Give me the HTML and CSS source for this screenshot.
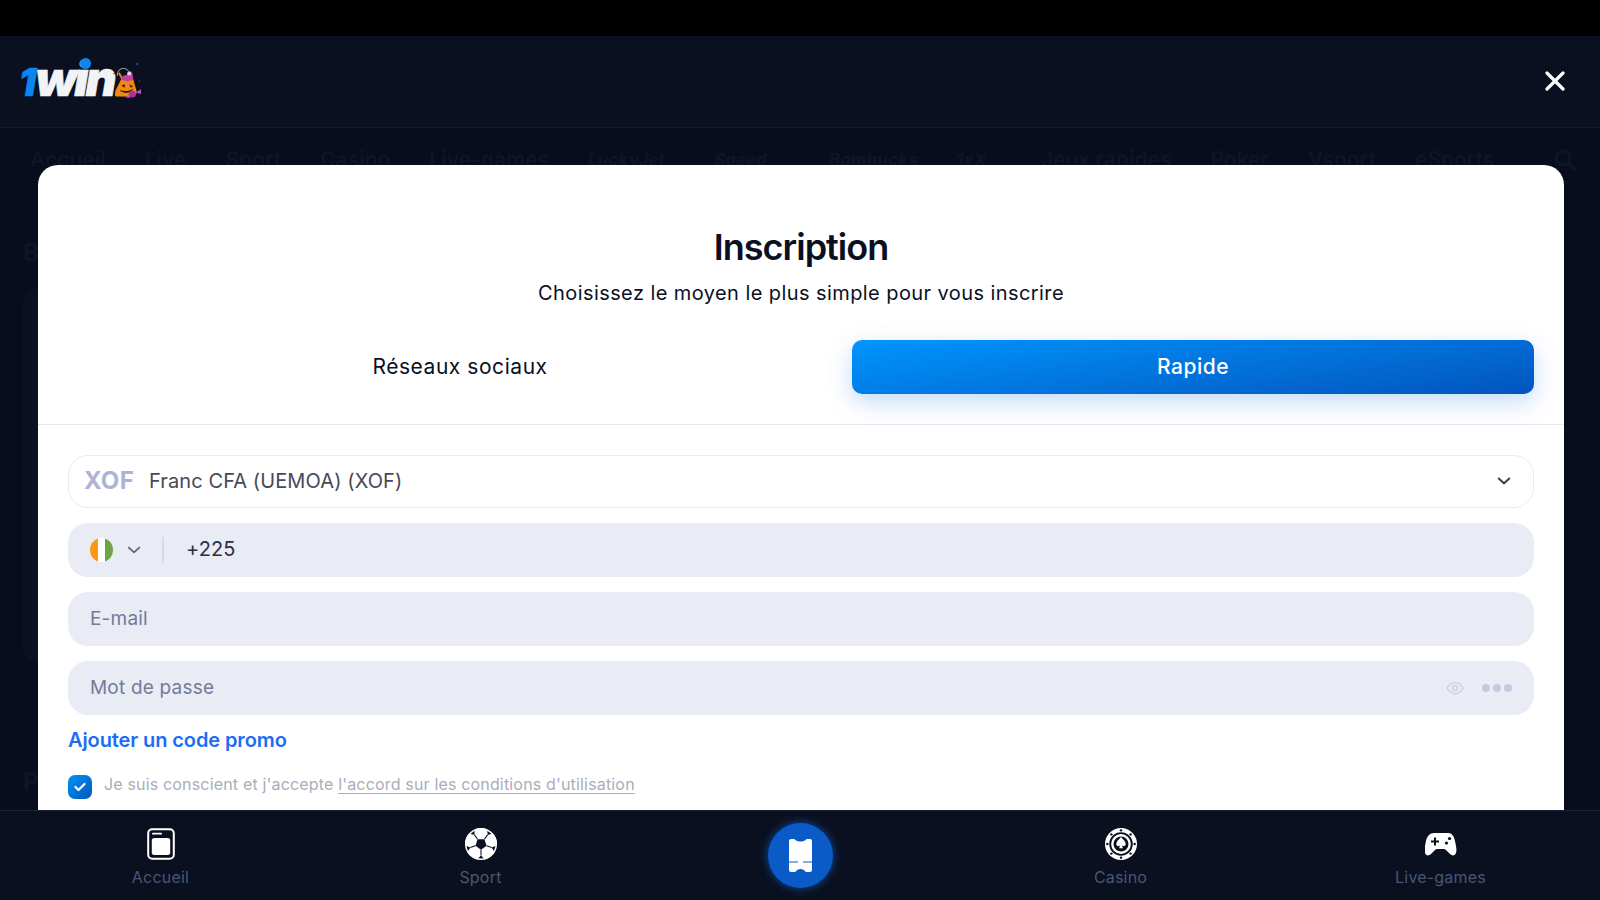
FILE: index.html
```html
<!DOCTYPE html>
<html lang="fr">
<head>
<meta charset="utf-8">
<title>Inscription</title>
<link rel="stylesheet" href="styles.css">
</head>
<body>
<div class="viewport">
  <div class="topbar"></div>
  <header class="header">
    <div class="logo">
      <span class="logo-one">1</span><span class="logo-win">win</span>
      <i class="logo-dot"></i>
      <svg class="logo-art" viewBox="0 0 40 48" aria-hidden="true">
        <circle cx="34" cy="5" r="1.500" fill="#1c4f8f"/><circle cx="5" cy="17" r="1" fill="#1c4f8f"/><circle cx="37" cy="27" r="1" fill="#1c4f8f"/>
        <path d="M9 20C9 7 24 8 26 20" fill="none" stroke="#b9b9c0" stroke-width="1.200"/>
        <path d="M11 16l5 9" stroke="#ee7a12" stroke-width="2.500"/>
        <path d="M14 24c4-3 11-3 15 0l4 14c1 5-1 8-5 8H8c-3 0-2-4-1-8z" fill="#f28a12"/>
        <path d="M14 25c0-5 4-6 7-6 1-5 6-6 7-2 1 3 1 6 1 8l-7 2z" fill="#c33fa0"/>
        <circle cx="24" cy="17" r="2.500" fill="#e9d6ee"/>
        <path d="M14 32l5-1-1 4zM24 31l5 2-3 2zM12 38c5 2 12 2 17-2-2 7-14 7-17 2z" fill="#3b1a05"/>
        <circle cx="28" cy="43" r="4.500" fill="#a7339f"/><path d="M32 41l7-4v6zM24 44l-5 3 6 1z" fill="#d14bbd"/>
      </svg>
    </div>
    <svg class="close" viewBox="0 0 20 20" aria-hidden="true"><path d="M2 2l16 16M18 2L2 18"/></svg>
  </header>
  <main class="stage">
    <nav class="behind-nav">
      <span>Accueil</span><span>Live</span><span>Sport</span><span>Casino</span><span>Live-games</span><span class="promo promo-a">LuckyJet</span><span class="promo promo-b">Speed</span><span class="promo promo-c">Bombucks</span><span class="promo promo-d">1xX</span><span>Jeux rapides</span><span>Poker</span><span>Vsport</span><span>eSports</span>
      <svg class="behind-search" viewBox="0 0 24 24" aria-hidden="true"><circle cx="10" cy="10" r="7"/><path d="M15 15l7 7"/></svg>
    </nav>
    <span class="behind-letter behind-b">B</span>
    <div class="behind-card"></div>
    <span class="behind-letter behind-p">P</span>

    <section class="modal">
      <div class="modal-head">
        <h1 class="title">Inscription</h1>
        <p class="subtitle">Choisissez le moyen le plus simple pour vous inscrire</p>
        <div class="tabs">
          <button class="tab">Réseaux sociaux</button>
          <button class="tab tab-active">Rapide</button>
        </div>
      </div>
      <form class="form">
        <div class="select">
          <span class="cur-code">XOF</span>
          <span class="cur-name">Franc CFA (UEMOA) (XOF)</span>
          <svg class="chev-dark" viewBox="0 0 12 8" aria-hidden="true"><path d="M1 1.500l5 4.500 5-4.500"/></svg>
        </div>
        <div class="field">
          <span class="flag"><i class="flag-o"></i><i class="flag-w"></i><i class="flag-g"></i></span>
          <svg class="chev" viewBox="0 0 12 8" aria-hidden="true"><path d="M1 1.500l5 4.500 5-4.500"/></svg>
          <span class="sep"></span>
          <span class="phone">+225</span>
        </div>
        <div class="field"><span class="placeholder">E-mail</span></div>
        <div class="field">
          <span class="placeholder">Mot de passe</span>
          <svg class="eye" viewBox="0 0 18 14" aria-hidden="true"><path d="M1 7c4-7.500 12-7.500 16 0-4 7.500-12 7.500-16 0z"/><circle cx="9" cy="7" r="2.500"/></svg>
          <span class="dots"><i></i><i></i><i></i></span>
        </div>
        <a class="promo-link">Ajouter un code promo</a>
        <div class="agree">
          <span class="check"><svg viewBox="0 0 12 10" aria-hidden="true"><path d="M1.500 5l3 3 6-6"/></svg></span>
          <span class="agree-text">Je suis conscient et j'accepte <u>l'accord sur les conditions d'utilisation</u></span>
        </div>
      </form>
    </section>
  </main>
  <footer class="tabbar">
    <a class="nav-item">
      <svg class="nav-icon" viewBox="0 0 28 32" aria-hidden="true"><rect x="1.200" y="1.200" width="25.600" height="29.600" rx="4" fill="none" stroke="#fff" stroke-width="2"/><rect x="5" y="4.800" width="10" height="1.800" rx=".9" fill="#fff"/><rect x="4.800" y="10" width="18.400" height="17" rx="2.500" fill="#fff"/></svg>
      <span>Accueil</span>
    </a>
    <a class="nav-item">
      <svg class="nav-icon" viewBox="0 0 30 30" aria-hidden="true"><circle cx="15" cy="15" r="15" fill="#fff"/><path d="M18.200 10.600l2 6.100L15 20.500l-5.200-3.800 2-6.100z" fill="#0a101f"/><path d="M18.200 10.600l3-4.100M20.200 16.700l4.800 1.500M15 20.500v5M9.800 16.700L5 18.200M11.800 10.600l-3-4.100" stroke="#0a101f" stroke-width="1"/><path d="M21.200 6.500l-.4-5.900 6.100 4.400zM25 18.200l5.500-2.100-2.400 7.100zM15 25.500l3.750 4.500h-7.500zM5 18.200l-5.500-2.100 2.400 7.100zM8.800 6.500l.4-5.900L3.100 5z" fill="#0a101f"/><circle cx="15" cy="15" r="14.300" fill="none" stroke="#fff" stroke-width="1.400"/></svg>
      <span>Sport</span>
    </a>
    <a class="nav-item nav-center">
      <span class="ticket"><svg viewBox="0 0 23 33" aria-hidden="true"><path d="M2 0h3c1 0 1.500 2.500 6.500 2.500S17 0 18 0h3a2 2 0 0 1 2 2v29a2 2 0 0 1-2 2h-4c-1 0-1.500-3-5.500-3S7 33 6 33H2a2 2 0 0 1-2-2V2a2 2 0 0 1 2-2z" fill="#fff"/><path d="M0 23h9M14 23h9" stroke="#0a5ac8" stroke-width="1"/></svg></span>
    </a>
    <a class="nav-item">
      <svg class="nav-icon" viewBox="0 0 34 34" aria-hidden="true"><circle cx="17" cy="17" r="17" fill="#fff"/><circle cx="17" cy="17" r="12.500" fill="#0a101f"/><circle cx="17" cy="17" r="10.500" fill="#fff"/><circle cx="17" cy="17" r="8" fill="#0a101f"/><path d="M17 9.500c2.500 3 5 4.500 5 7.500 0 2.400-3 3-4 1.200l1 3.300h-4l1-3.300c-1 1.800-4 1.200-4-1.200 0-3 2.500-4.500 5-7.500z" fill="#fff"/><g fill="#0a101f"><circle cx="17" cy="2.500" r="1.300"/><circle cx="17" cy="31.500" r="1.300"/><circle cx="2.500" cy="17" r="1.300"/><circle cx="31.500" cy="17" r="1.300"/><circle cx="6.800" cy="6.800" r="1.300"/><circle cx="27.200" cy="6.800" r="1.300"/><circle cx="6.800" cy="27.200" r="1.300"/><circle cx="27.200" cy="27.200" r="1.300"/></g></svg>
      <span>Casino</span>
    </a>
    <a class="nav-item">
      <svg class="nav-icon nav-icon-wide" viewBox="0 0 32 24" aria-hidden="true"><path d="M9 1h14c4 0 6 3 7 8s2 9 1 12c-1 3-4 3-6 1l-4-4c-1-1-1.500-1-2.500-1h-6c-1 0-1.500 0-2.500 1l-4 4c-2 2-5 2-6-1-1-3 0-7 1-12S5 1 9 1z" fill="#fff"/><path d="M9 5.500h2v3h3v2h-3v3H9v-3H6v-2h3z" fill="#0a101f"/><circle cx="24.500" cy="6.500" r="1.600" fill="#0a101f"/><circle cx="21.500" cy="11" r="1.600" fill="#0a101f"/></svg>
      <span>Live-games</span>
    </a>
  </footer>
</div>
</body>
</html>
```
FILE: styles.css
```css
* { box-sizing: border-box; }
html, body { margin: 0; padding: 0; }
body { background: #000; font-family: Inter, "Liberation Sans", sans-serif; }

.viewport { width: 1600px; height: 900px; display: flex; flex-direction: column; overflow: hidden; background: #070d1d; }
.topbar { height: 36px; background: #000; flex: none; }

.header { height: 92px; flex: none; display: flex; align-items: center; justify-content: space-between; padding: 0 35px 2px 19px; border-bottom: 1px solid #141a2b; background: #0a101f; }
.logo { position: relative; display: flex; align-items: baseline; height: 50px; width: 126px; font-family: Inter, sans-serif; font-weight: 900; font-style: italic; line-height: 46px; }
.logo-one { color: #0b86f0; font-size: 38px; margin-right: -1px; -webkit-text-stroke: .6px #0b86f0; }
.logo-win { color: #f2f3f5; font-size: 48px; letter-spacing: -3px; -webkit-text-stroke: .6px #f2f3f5; }
.logo-dot { position: absolute; left: 61px; top: 2px; width: 11px; height: 11px; border-radius: 50%; background: #0b86f0; }
.logo-art { position: absolute; left: 91px; top: 4px; width: 32px; height: 38px; }
.close { width: 20px; height: 20px; fill: none; stroke: #fff; stroke-width: 3.200; stroke-linecap: round; }

.stage { position: relative; flex: 1; min-height: 0; overflow: hidden; }
.behind-nav { display: flex; align-items: center; gap: 39px; height: 60px; padding: 3px 23px 0 30px; color: #0e1524; font-size: 21px; font-weight: 600; white-space: nowrap; }
.behind-nav .promo { display: block; font-style: italic; font-weight: 800; font-size: 17px; }
.behind-nav .promo-a { width: 87px; }
.behind-nav .promo-b { width: 76px; }
.behind-nav .promo-c { width: 88px; }
.behind-nav .promo-d { width: 46px; }
.behind-search { width: 24px; height: 24px; margin-left: auto; fill: none; stroke: #0e1524; stroke-width: 3; }
.behind-letter { position: absolute; left: 23px; color: #0e1524; font-size: 24px; font-weight: 700; }
.behind-b { top: 110px; }
.behind-p { top: 639px; }
.behind-card { position: absolute; left: 23px; top: 160px; width: 60px; height: 374px; border-radius: 16px; background: #0c1020; }

.modal { position: absolute; left: 38px; top: 37px; width: 1526px; height: 720px; background: #fff; border-radius: 20px 20px 0 0; }
.modal-head { height: 260px; padding-top: 60px; border-bottom: 1px solid #e4e7ef; text-align: center; }
.title { margin: 0; font-size: 36px; line-height: 44px; font-weight: 600; letter-spacing: -1px; color: #0a101f; }
.subtitle { margin: 10px 0 0; font-size: 20px; line-height: 28px; font-weight: 400; letter-spacing: .42px; color: #0a101f; }
.tabs { display: grid; grid-template-columns: 1fr 682px; margin-top: 33px; padding: 0 30px; }
.tab { height: 54px; padding: 0 0 2px; border: 0; background: transparent; font: 400 21px Inter, sans-serif; letter-spacing: .55px; color: #0a101f; border-radius: 10px; }
.tab-active { color: #fff; font-weight: 500; letter-spacing: .5px; background: linear-gradient(172deg, #0095fe 0%, #0354bd 100%); box-shadow: 0 8px 24px rgba(0, 105, 225, .24); }

.form { padding: 30px 30px 0; display: flex; flex-direction: column; }
.select { display: flex; align-items: center; height: 53px; border: 1px solid #e9ebf5; border-radius: 20px; padding: 0 22px 2px 15px; }
.cur-code { font-size: 24px; font-weight: 700; color: #adb3d8; width: 65px; letter-spacing: .4px; }
.cur-name { font-size: 20px; letter-spacing: .1px; color: #454a58; flex: 1; }
.chev-dark { width: 14px; height: 10px; fill: none; stroke: #3d4252; stroke-width: 1.800; }
.field { display: flex; align-items: center; height: 54px; margin-top: 15px; padding: 0 22px; background: #e9ebf5; border-radius: 20px; }
.flag { display: flex; width: 23px; height: 24px; border-radius: 50%; overflow: hidden; flex: none; }
.flag i { flex: 1; display: block; }
.flag-o { background: #ff9811; }
.flag-w { background: #fff; }
.flag-g { background: #6da544; }
.chev { width: 14px; height: 10px; margin-left: 14px; fill: none; stroke: #5f6780; stroke-width: 1.600; }
.sep { width: 2px; height: 26px; margin: 0 22px 0 21px; background: #d6dbea; }
.phone { font-size: 20px; letter-spacing: .1px; color: #2c3140; margin-top: -2px; }
.placeholder { font-size: 19px; letter-spacing: .2px; color: #737b98; flex: 1; margin-top: -2px; }
.eye { width: 18px; height: 14px; fill: none; stroke: #cdd1e2; stroke-width: 1.500; }
.dots { display: flex; gap: 3px; margin-left: 18px; }
.dots i { width: 8px; height: 8px; border-radius: 50%; background: #c2cae4; }
.promo-link { margin-top: 13px; font-size: 20px; line-height: 24px; font-weight: 600; letter-spacing: -.1px; color: #1a6ef5; }
.agree { display: flex; align-items: flex-start; gap: 12px; margin-top: 23px; }
.check { width: 24px; height: 24px; border-radius: 7px; background: linear-gradient(135deg, #0095fa, #0356b8); display: flex; align-items: center; justify-content: center; flex: none; }
.check svg { width: 12px; height: 10px; fill: none; stroke: #fff; stroke-width: 2.200; stroke-linecap: round; stroke-linejoin: round; }
.agree-text { font-size: 16px; line-height: 18px; letter-spacing: .17px; color: #a9adbc; }
.agree-text u { text-underline-offset: 3px; }

.tabbar { position: relative; height: 90px; flex: none; display: grid; grid-template-columns: repeat(5, 320px); background: #0a101f; border-top: 1px solid #1a2135; }
.nav-item { display: flex; flex-direction: column; align-items: center; padding: 17px 0 0 1px; gap: 7px; font-size: 16px; line-height: 20px; letter-spacing: .2px; color: #4a5675; }
.nav-icon { width: 32px; height: 32px; }
.nav-center { padding: 12px 0 0; }
.ticket { width: 65px; height: 65px; border-radius: 50%; background: #0a5ac8; box-shadow: 0 0 10px rgba(10, 120, 255, .6); display: flex; align-items: center; justify-content: center; }
.ticket svg { width: 23px; height: 33px; }
```
